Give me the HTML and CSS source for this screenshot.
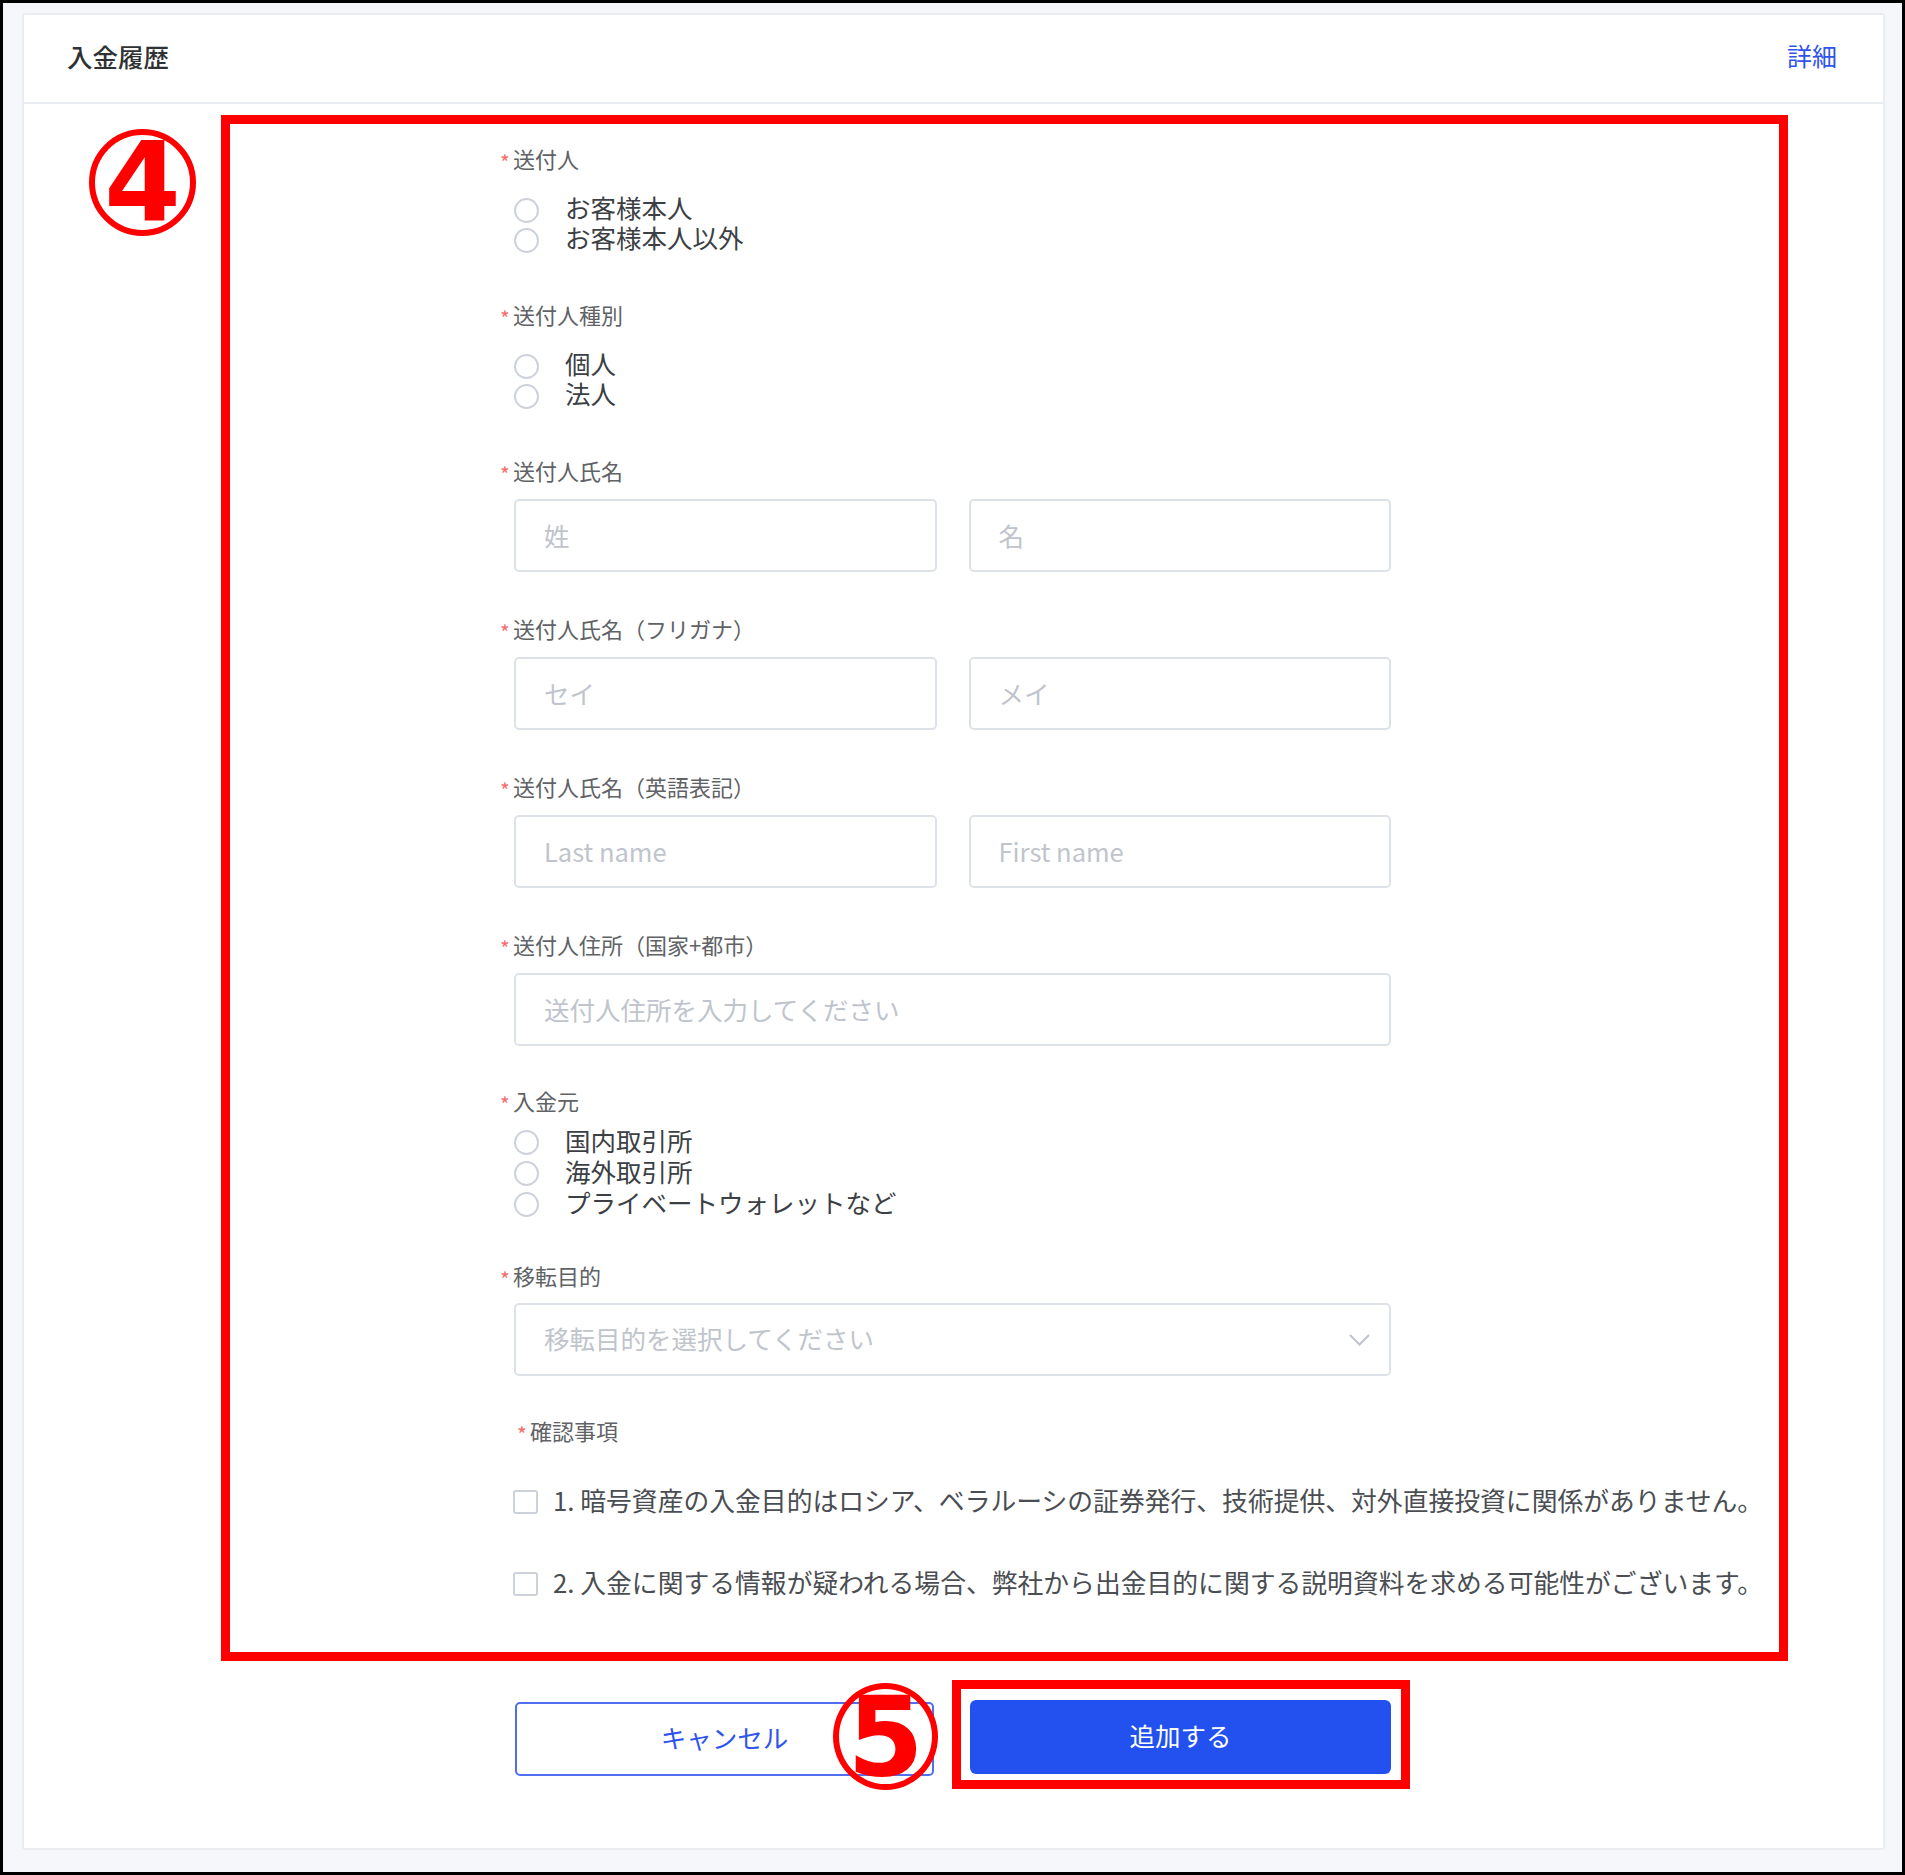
FILE: index.html
```html
<!DOCTYPE html>
<html lang="ja">
<head>
  <meta charset="UTF-8" />
  <meta name="viewport" content="width=device-width, initial-scale=1.0"/>
  <title>入金履歴</title>
  <link rel="stylesheet" href="styles.css">
</head>
<body>

  <div class="card">
    <div class="card-header">
      <span class="card-title">入金履歴</span>
      <a class="detail-link" href="#">詳細</a>
    </div>

    <div class="card-body">
      <div class="mark mark-4">4</div>

      <div class="highlight">
        <div class="item item-radio">
          <div class="label"><span class="req">*</span>送付人</div>
          <div class="field radios">
            <label class="radio"><span class="circle"></span><span class="radio-text">お客様本人</span></label>
            <label class="radio"><span class="circle"></span><span class="radio-text">お客様本人以外</span></label>
          </div>
        </div>

        <div class="item item-radio">
          <div class="label"><span class="req">*</span>送付人種別</div>
          <div class="field radios">
            <label class="radio"><span class="circle"></span><span class="radio-text">個人</span></label>
            <label class="radio"><span class="circle"></span><span class="radio-text">法人</span></label>
          </div>
        </div>

        <div class="item item-input">
          <div class="label"><span class="req">*</span>送付人氏名</div>
          <div class="field inputs">
            <input class="input" type="text" placeholder="姓">
            <input class="input" type="text" placeholder="名">
          </div>
        </div>

        <div class="item item-input">
          <div class="label"><span class="req">*</span>送付人氏名（フリガナ）</div>
          <div class="field inputs">
            <input class="input" type="text" placeholder="セイ">
            <input class="input" type="text" placeholder="メイ">
          </div>
        </div>

        <div class="item item-input">
          <div class="label"><span class="req">*</span>送付人氏名（英語表記）</div>
          <div class="field inputs">
            <input class="input" type="text" placeholder="Last name">
            <input class="input" type="text" placeholder="First name">
          </div>
        </div>

        <div class="item item-address">
          <div class="label"><span class="req">*</span>送付人住所（国家+都市）</div>
          <div class="field inputs">
            <input class="input" type="text" placeholder="送付人住所を入力してください">
          </div>
        </div>

        <div class="item item-source">
          <div class="label"><span class="req">*</span>入金元</div>
          <div class="field radios radios-tall">
            <label class="radio"><span class="circle"></span><span class="radio-text">国内取引所</span></label>
            <label class="radio"><span class="circle"></span><span class="radio-text">海外取引所</span></label>
            <label class="radio"><span class="circle"></span><span class="radio-text">プライベートウォレットなど</span></label>
          </div>
        </div>

        <div class="item item-select">
          <div class="label"><span class="req">*</span>移転目的</div>
          <div class="field">
            <div class="select">
              <span class="select-placeholder">移転目的を選択してください</span>
              <svg width="21" height="12" viewBox="0 0 21 12">
                <polyline points="1,1 10.5,10.5 20,1" fill="none" stroke="#c0c4cc" stroke-width="2"/>
              </svg>
            </div>
          </div>
        </div>

        <div class="item">
          <div class="label label-confirm"><span class="req">*</span>確認事項</div>
          <div class="checks">
            <label class="check"><span class="box"></span><span class="check-text">1. 暗号資産の入金目的はロシア、ベラルーシの証券発行、技術提供、対外直接投資に関係がありません。</span></label>
            <label class="check"><span class="box"></span><span class="check-text">2. 入金に関する情報が疑われる場合、弊社から出金目的に関する説明資料を求める可能性がございます。</span></label>
          </div>
        </div>
      </div>

      <div class="actions">
        <button class="btn btn-cancel">キャンセル</button>
        <div class="mark mark-5">5</div>
        <div class="highlight-btn">
          <button class="btn btn-primary">追加する</button>
        </div>
      </div>
    </div>
  </div>

</body>
</html>
```

FILE: styles.css
```css
body {
  margin: 0;
  width: 1905px;
  height: 1875px;
  box-sizing: border-box;
  border: 3px solid #000;
  background-color: #f5f7fa;
  font-family: "Noto Sans CJK JP", sans-serif;
  overflow: hidden;
}

.card {
  margin: 10px 17px 0 19px;
  background: #fff;
  border: 2px solid #e9edf2;
  border-radius: 3px;
  padding-bottom: 59px;
}

.card-header {
  display: flex;
  justify-content: space-between;
  align-items: center;
  height: 87px;
  box-sizing: border-box;
  padding: 0 46px 7px 43px;
  border-bottom: 2px solid #e9edf2;
  height: 89px;
}

.card-title {
  font-size: 25.5px;
  font-weight: 500;
  color: #303133;
}

.detail-link {
  font-size: 25px;
  color: #2f54eb;
  text-decoration: none;
}

.card-body {
  position: relative;
  padding-top: 11px;
}

/* red annotation frames */
.highlight {
  margin-left: 197px;
  width: 1567px;
  box-sizing: border-box;
  border: 9px solid #ff0000;
  padding: 21px 0 48px 270px;
}

.mark {
  position: absolute;
  width: 107px;
  height: 107px;
  box-sizing: border-box;
  border: 6px solid #ff0000;
  border-radius: 50%;
  display: flex;
  align-items: center;
  justify-content: center;
  color: #ff0000;
  font-family: "DejaVu Sans", sans-serif;
  font-weight: bold;
  font-size: 110px;
  line-height: 1;
  z-index: 2;
}

.mark-4 {
  left: 65px;
  top: 25px;
}

.mark-5 {
  left: 318px;
  top: 3px;
  width: 105px;
}

/* form */
.label {
  display: flex;
  align-items: center;
  height: 30px;
  box-sizing: border-box;
  padding-bottom: 4px;
  line-height: 26px;
  font-size: 22px;
  color: #606266;
}

.req {
  display: inline-block;
  width: 13px;
  font-size: 21px;
  line-height: 1;
  color: #f56c6c;
  margin-top: 9px;
}

.label-confirm {
  padding-left: 17px;
}

.field {
  padding-left: 14px;
}

.item-radio {
  margin-bottom: 46px;
}

.item-input {
  margin-bottom: 43px;
}

.item-address {
  margin-bottom: 41px;
}

.item-source {
  margin-bottom: 42px;
}

.item-select {
  margin-bottom: 41px;
}

.radios {
  margin-top: 20px;
}

.radios-tall {
  margin-top: 10px;
}

.radio {
  display: flex;
  align-items: center;
  height: 30px;
  font-size: 25.5px;
  color: #3c3f44;
  cursor: pointer;
}

.radios-tall .radio {
  height: 31px;
}

.radio-text {
  line-height: 26px;
  margin-bottom: 6px;
}

.circle {
  width: 25px;
  height: 25px;
  box-sizing: border-box;
  border: 2px solid #cdd2da;
  border-radius: 50%;
  margin-right: 26px;
}

.inputs {
  display: flex;
  gap: 32px;
  width: 877px;
  margin-top: 12px;
}

.input {
  flex: 1;
  min-width: 0;
  height: 73px;
  box-sizing: border-box;
  border: 2px solid #dde2e9;
  border-radius: 5px;
  padding: 0 28px 2px;
  font-family: inherit;
  font-size: 25.5px;
  color: #303133;
  outline: none;
}

.input::placeholder {
  color: #c0c4cc;
}

.select {
  display: flex;
  justify-content: space-between;
  align-items: center;
  width: 877px;
  height: 73px;
  box-sizing: border-box;
  margin-top: 11px;
  border: 2px solid #dde2e9;
  border-radius: 5px;
  padding: 0 19px 0 28px;
}

.select-placeholder {
  font-size: 25.5px;
  line-height: 30px;
  margin-bottom: 3px;
  color: #c0c4cc;
}

.checks {
  margin-top: 35px;
}

.check {
  display: flex;
  align-items: center;
  height: 40px;
  padding-left: 13px;
  font-size: 25.8px;
  color: #4a4d52;
  white-space: nowrap;
  cursor: pointer;
}

.check-text {
  line-height: 30px;
  margin-bottom: 4px;
}

.check + .check {
  margin-top: 42px;
}

.box {
  width: 25px;
  height: 24px;
  box-sizing: border-box;
  border: 2px solid #cdd2da;
  border-radius: 3px;
  margin-right: 15px;
  flex-shrink: 0;
}

/* buttons */
.actions {
  position: relative;
  display: flex;
  align-items: flex-start;
  margin: 19px 0 0 491px;
}

.btn {
  font-family: inherit;
  font-size: 25.5px;
  border-radius: 5px;
  padding: 0 0 6px;
  cursor: pointer;
}

.btn-cancel {
  width: 419px;
  height: 74px;
  margin-top: 22px;
  border: 2px solid #4f6ff0;
  background: #fff;
  color: #2f54eb;
}

.highlight-btn {
  margin-left: 18px;
  border: 9px solid #ff0000;
  padding: 11px 10px 6px 9px;
}

.btn-primary {
  display: block;
  width: 421px;
  height: 74px;
  border: none;
  border-radius: 6px;
  background-color: #2251f0;
  color: #fff;
}
```
